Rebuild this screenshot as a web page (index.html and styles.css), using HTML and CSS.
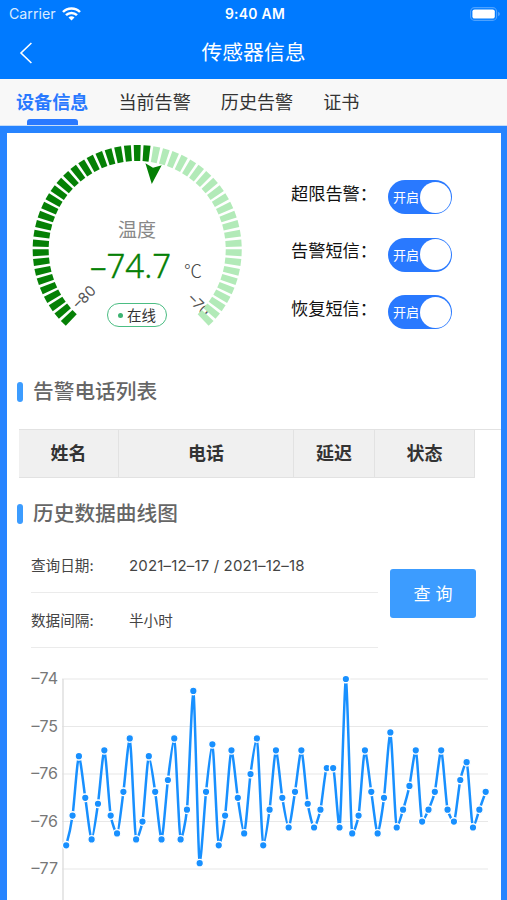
FILE: index.html
```
<!DOCTYPE html>
<html lang="zh-CN">
<head>
	<meta charset="UTF-8"/>
	<title>传感器信息</title>
	<meta name="viewport" content="width=device-width, initial-scale=1.0"/>
	<link rel="stylesheet" href="styles.css">
</head>
<body>
	<header class="header">
		<div class="status">
			<div class="carrier">
				<span>Carrier</span>
				<svg width="19" height="14" viewBox="0 0 19 14" fill="none" stroke="#fff" stroke-width="2.5">
					<path d="M1 5C5.5 .4 13.5 .4 18 5"/>
					<path d="M4 8.2C7 5.2 12 5.2 15 8.2"/>
					<path d="M6.5 10.5C8.2 8.8 10.8 8.8 12.5 10.5L9.5 13.6z" fill="#fff" stroke="none"/>
				</svg>
			</div>
			<div class="time">9:40 AM</div>
			<svg class="battery" width="31" height="14" viewBox="0 0 31 14">
				<rect x=".6" y=".6" width="26" height="12.8" rx="4" fill="none" stroke="#4da2ff" stroke-width="1.1"/>
				<rect x="2.4" y="2.4" width="22.4" height="9.2" rx="2.2" fill="#fff"/>
				<path d="M28 4.8q2 .8 2 2.2t-2 2.2z" fill="#4da2ff"/>
			</svg>
		</div>
		<div class="title-bar">
			<svg class="back" width="14" height="22" viewBox="0 0 14 22" fill="none" stroke="#fff" stroke-width="1.6"><path d="M12.4 1L2 11l10.4 10"/></svg>
			<h1>传感器信息</h1>
		</div>
	</header>

	<nav class="tabs">
		<a class="active" href="#">设备信息</a>
		<a href="#">当前告警</a>
		<a href="#">历史告警</a>
		<a href="#">证书</a>
	</nav>

	<main class="page">
		<section class="overview">
			<div class="gauge">
				<svg width="220" height="200" viewBox="0 0 220 200">
					<text class="scale" transform="translate(57.4 160) rotate(-45)" text-anchor="middle" dy="5">–80</text>
					<text class="scale" transform="translate(171.8 168) rotate(45)" text-anchor="middle" dy="5">–70</text>
					<g id="ticks"></g>
					<path d="M118.4 26.2l7.6 4.6 8.7-2.6-9.9 18.7z" fill="#058005"/>
				</svg>
				<div class="reading">
					<div class="name">温度</div>
					<div class="value"><span>–74.7</span><span class="unit">℃</span></div>
					<div class="online"><i></i>在线</div>
				</div>
			</div>
			<div class="switches">
				<div class="switch-row"><span>超限告警：</span><div class="switch">开启<i></i></div></div>
				<div class="switch-row"><span>告警短信：</span><div class="switch">开启<i></i></div></div>
				<div class="switch-row"><span>恢复短信：</span><div class="switch">开启<i></i></div></div>
			</div>
		</section>

		<h2>告警电话列表</h2>
		<div class="table">
			<div class="table-head">
				<div>姓名</div>
				<div>电话</div>
				<div>延迟</div>
				<div>状态</div>
			</div>
		</div>

		<h2>历史数据曲线图</h2>
		<div class="query">
			<div class="fields">
				<div class="field"><label>查询日期:</label><span class="date">2021–12–17 / 2021–12–18</span></div>
				<div class="field"><label>数据间隔:</label><span>半小时</span></div>
			</div>
			<button type="button">查 询</button>
		</div>

		<svg class="chart" id="chart" width="494" height="250" viewBox="0 0 494 250"></svg>
	</main>

	<script src="script.js"></script>
</body>
</html>
```

FILE: styles.css
```
* {
	margin: 0;
	padding: 0;
	box-sizing: border-box;
}

body {
	height: 900px;
	overflow: hidden;
	display: flex;
	flex-direction: column;
	background-color: #2784ff;
	color: #333;
	font-family: Inter, "Noto Sans CJK SC", sans-serif;
}

svg {
	display: block;
}

.header {
	height: 79px;
	background-color: #007aff;
	color: #fff;
}
.status {
	display: grid;
	grid-template-columns: 1fr auto 1fr;
	align-items: center;
	height: 27px;
	padding: 0 6px 0 9px;
	font-size: 14.2px;
}
.carrier {
	display: flex;
	align-items: center;
	gap: 6px;
	color: #d9ebff;
}
.time {
	font-size: 13.9px;
	font-weight: 600;
	letter-spacing: .3px;
}
.battery {
	justify-self: end;
}
.title-bar {
	display: grid;
	grid-template-columns: 1fr auto 1fr;
	align-items: center;
	height: 51px;
	padding: 0 19px;
}
.title-bar h1 {
	font-size: 20.8px;
	font-weight: 400;
	line-height: 30px;
}

.tabs {
	display: flex;
	gap: 30px;
	height: 47px;
	padding: 0 16px;
	background-color: #f8f8f8;
	border-bottom: 1px solid #c5dcf8;
}
.tabs a {
	display: flex;
	flex-direction: column;
	align-items: center;
	justify-content: space-between;
	height: 46px;
	padding-top: 10px;
	color: #333;
	font-size: 18.1px;
	line-height: 27px;
	text-decoration: none;
}
.tabs .active {
	color: #2979ff;
	font-weight: 700;
}
.tabs .active::after {
	content: "";
	width: 51px;
	height: 6px;
	border-radius: 3px 3px 0 0;
	background-color: #2979ff;
}

.page {
	flex: 1;
	margin: 7px 6px 0 7px;
	background-color: #fff;
	overflow: hidden;
}

.overview {
	display: flex;
	height: 240px;
}
.gauge {
	display: grid;
	width: 220px;
	height: 200px;
	margin: 4px 0 0 20px;
}
.gauge > * {
	grid-area: 1 / 1;
}
.scale {
	font-size: 14.5px;
	fill: #555;
}
.reading {
	display: flex;
	flex-direction: column;
	align-items: center;
	padding-top: 80px;
}
.reading .name {
	color: #888;
	font-size: 19px;
	line-height: 28px;
}
.reading .value {
	display: flex;
	align-items: baseline;
	gap: 13px;
	height: 46px;
	margin-left: 18px;
	color: #058005;
	font-family: "Noto Sans", sans-serif;
	font-size: 33px;
	font-weight: 300;
	line-height: 41px;
	-webkit-text-stroke: .4px #058005;
}
.reading .unit {
	color: #444;
	font-family: "Noto Sans CJK SC", sans-serif;
	font-size: 18px;
	-webkit-text-stroke: 0;
}
.online {
	display: flex;
	align-items: center;
	justify-content: center;
	gap: 4px;
	width: 60px;
	height: 24px;
	margin-top: 12px;
	padding-bottom: 2px;
	border: 1px solid #4bbd83;
	border-radius: 12px;
	font-size: 14.5px;
}
.online i {
	width: 5px;
	height: 5px;
	margin-top: 2px;
	border-radius: 50%;
	background-color: #3cb371;
}

.switches {
	display: flex;
	flex-direction: column;
	gap: 23.5px;
	padding: 47px 0 0 44px;
	color: #111;
	font-size: 17.2px;
}
.switch-row {
	display: flex;
	align-items: center;
	height: 34px;
}
.switch-row span {
	width: 97px;
	line-height: 26px;
	margin-top: -7px;
}
.switch {
	display: flex;
	align-items: center;
	justify-content: space-between;
	width: 64px;
	height: 34px;
	padding: 0 1px 0 5px;
	border-radius: 17px;
	background-color: #2979ff;
	color: #fff;
	font-size: 13px;
	line-height: 32px;
}
.switch i {
	width: 31px;
	height: 31px;
	border-radius: 50%;
	background-color: #fff;
}

h2 {
	display: flex;
	align-items: center;
	gap: 10px;
	height: 38px;
	padding-left: 10px;
	color: #666;
	font-size: 20.7px;
	font-weight: 500;
	line-height: 38px;
}
h2::before {
	content: "";
	width: 6px;
	height: 20px;
	border-radius: 3px;
	background-color: #3c9cff;
}

.table {
	height: 66px;
	margin: 18px 0 0 12px;
	border-top: 1px solid #e2e2e2;
}
.table-head {
	display: grid;
	grid-template-columns: 100px 175px 81px 100px;
	width: 456px;
	height: 48px;
	background-color: #f0f0f0;
	border-bottom: 1px solid #e2e2e2;
}
.table-head div {
	border-right: 1px solid #e2e2e2;
	font-size: 18px;
	font-weight: 600;
	line-height: 47px;
	text-align: center;
}

.query {
	display: flex;
	align-items: center;
	gap: 12px;
	height: 120px;
	padding: 0 24px;
}
.fields {
	width: 347px;
}
.field {
	display: flex;
	align-items: center;
	height: 55px;
	padding-bottom: 1px;
	border-bottom: 1px solid #ebebeb;
	color: #444;
	font-size: 14.6px;
}
.field label {
	width: 98px;
}
.field .date {
	padding-top: 2px;
	font-size: 15px;
	letter-spacing: .16px;
}
.query button {
	width: 86px;
	height: 49px;
	padding-bottom: 2px;
	border: none;
	border-radius: 3px;
	background-color: #3c9cff;
	color: #fff;
	font-family: inherit;
	font-size: 17px;
}

.chart text {
	fill: #777;
	font-size: 16px;
	text-anchor: end;
}
.chart .grid {
	stroke: #e8e8e8;
	stroke-width: 1.2;
}
.chart .axis {
	stroke: #ddd;
	stroke-width: 1.4;
}
.chart .line {
	fill: none;
	stroke: #1890ff;
	stroke-width: 2.5;
}
.chart circle {
	fill: #1890ff;
	stroke: #fff;
	stroke-width: 1.4;
}
```

FILE: script.js
```
const NS = "http://www.w3.org/2000/svg";

function add(parent, tag, attrs, text) {
	const el = document.createElementNS(NS, tag);
	for (const k in attrs) {
		el.setAttribute(k, attrs[k]);
	}
	if (text) {
		el.textContent = text;
	}
	parent.appendChild(el);
}

// gauge ticks
const ticks = document.getElementById("ticks");
for (let i = 0; i <= 50; i++) {
	add(ticks, "path", {
		d: "M106.7 8h7l-.5 16h-6z",
		transform: `rotate(${-135 + i * 5.4} 110.2 112.5)`,
		fill: i < 27 ? "#058005" : "#b2eab8"
	});
}

// history chart, values are 0.1 steps below the top line
const data = [
	28, 23, 13, 20, 27, 21, 12, 23, 26, 19, 10, 27, 24, 13, 19, 27, 17, 10, 27,
	22, 2, 31, 19, 11, 28, 23, 12, 20, 26, 16, 10, 28, 22, 12, 20, 25, 19, 12,
	21, 25, 22, 15, 15, 25, 0, 26, 23, 12, 19, 26, 20, 9, 25, 22, 18, 12, 24,
	22, 19, 12, 22, 24, 17, 14, 25, 22, 19
];
const chart = document.getElementById("chart");
const top0 = 26;
const step = 6.356;
const pts = data.map((v, i) => [59.2 + i * step, top0 + v * 5.94]);

["–74", "–75", "–76", "–76", "–77"].forEach((label, i) => {
	const y = top0 + i * 47.5;
	add(chart, "line", { class: "grid", x1: 55, x2: 481, y1: y, y2: y });
	add(chart, "text", { x: 51, y: y + 5 }, label);
});
add(chart, "line", { class: "axis", x1: 56, x2: 56, y1: top0, y2: 250 });

// monotone slopes so the curve never overshoots a point
const slope = pts.map((p, i) => {
	if (i == 0 || i == pts.length - 1) {
		return null;
	}
	const a = (p[1] - pts[i - 1][1]) / step;
	const b = (pts[i + 1][1] - p[1]) / step;
	if (a * b <= 0) {
		return 0;
	}
	return Math.sign(a) * Math.min(Math.abs(a), Math.abs(b), Math.abs(a + b) / 4) * 2;
});
const last = pts.length - 1;
slope[0] = (3 * (pts[1][1] - pts[0][1]) / step - slope[1]) / 2;
slope[last] = (3 * (pts[last][1] - pts[last - 1][1]) / step - slope[last - 1]) / 2;

let d = `M${pts[0]}`;
for (let i = 1; i < pts.length; i++) {
	const [x0, y0] = pts[i - 1];
	const [x1, y1] = pts[i];
	const h = step / 4.5;
	d += `C${x0 + h},${y0 + slope[i - 1] * h} ${x1 - h},${y1 - slope[i] * h} ${x1},${y1}`;
}
add(chart, "path", { class: "line", d: d });
pts.forEach(p => add(chart, "circle", { cx: p[0], cy: p[1], r: 3.8 }));
```
